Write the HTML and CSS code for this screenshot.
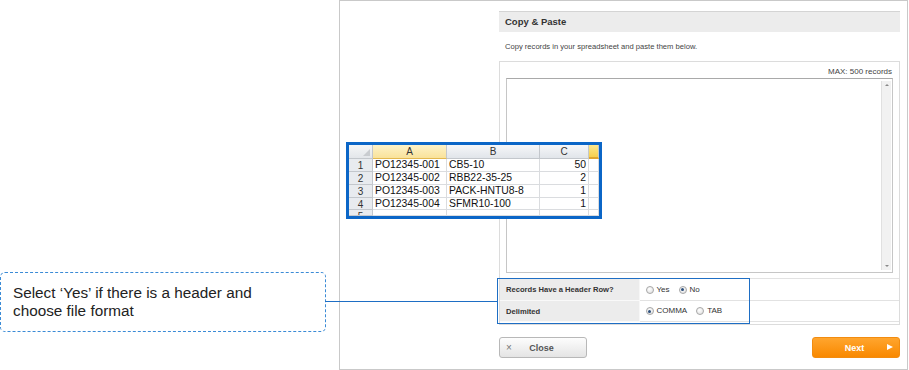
FILE: index.html
```html
<!DOCTYPE html>
<html lang="en">
    <head>
        <meta charset="UTF-8">
        <meta name="viewport" content="width=device-width, initial-scale=1.0">
        <title>Copy &amp; Paste - Import Guide</title>
        <link rel="stylesheet" href="styles.css">
    </head>
    <body>
        <div class="page">
            <aside class="notes">
                <div class="callout">Select ‘Yes’ if there is a header and<br>choose file format</div>
            </aside>

            <section class="dialog">
                <h2 class="section-title">Copy &amp; Paste</h2>
                <p class="lead">Copy records in your spreadsheet and paste them below.</p>

                <div class="paste-panel">
                    <div class="limit">MAX: 500 records</div>
                    <div class="paste-area">
                        <div class="scrollbar">
                            <span class="arrow-up"></span>
                            <span class="arrow-down"></span>
                        </div>
                    </div>

                    <table class="options">
                        <tr>
                            <th>Records Have a Header Row?</th>
                            <td>
                                <div class="choices">
                                    <label class="choice"><span class="radio"></span>Yes</label>
                                    <label class="choice"><span class="radio checked"></span>No</label>
                                </div>
                            </td>
                        </tr>
                        <tr>
                            <th>Delimited</th>
                            <td>
                                <div class="choices">
                                    <label class="choice"><span class="radio checked"></span>COMMA</label>
                                    <label class="choice"><span class="radio"></span>TAB</label>
                                </div>
                            </td>
                        </tr>
                    </table>
                </div>

                <div class="actions">
                    <button class="btn btn-close"><span class="btn-x">×</span>Close</button>
                    <button class="btn btn-next">Next<span class="btn-arrow"></span></button>
                </div>
            </section>
        </div>

        <!-- annotation overlays -->
        <div class="connector"></div>
        <div class="highlight"></div>

        <div class="sheet">
            <div class="cell corner"><span class="corner-mark"></span></div>
            <div class="cell col-head selected">A</div>
            <div class="cell col-head">B</div>
            <div class="cell col-head">C</div>
            <div class="cell col-head active"></div>

            <div class="cell row-head">1</div>
            <div class="cell">PO12345-001</div>
            <div class="cell">CB5-10</div>
            <div class="cell num">50</div>
            <div class="cell"></div>

            <div class="cell row-head">2</div>
            <div class="cell">PO12345-002</div>
            <div class="cell">RBB22-35-25</div>
            <div class="cell num">2</div>
            <div class="cell"></div>

            <div class="cell row-head">3</div>
            <div class="cell">PO12345-003</div>
            <div class="cell">PACK-HNTU8-8</div>
            <div class="cell num">1</div>
            <div class="cell"></div>

            <div class="cell row-head">4</div>
            <div class="cell">PO12345-004</div>
            <div class="cell">SFMR10-100</div>
            <div class="cell num">1</div>
            <div class="cell"></div>

            <div class="cell row-head">5</div>
            <div class="cell"></div>
            <div class="cell"></div>
            <div class="cell"></div>
            <div class="cell"></div>
        </div>
    </body>
</html>
```

FILE: styles.css
```css
* {
    box-sizing: border-box;
}

body {
    margin: 0;
    width: 909px;
    height: 370px;
    background-color: white;
    font-family: "Liberation Sans", Arial, sans-serif;
    color: #333;
    position: relative;
    overflow: hidden;
}

.page {
    display: flex;
}

.notes {
    width: 339px;
    padding-top: 272px;
}

.callout {
    width: 326px;
    height: 60px;
    border: 1px dashed #3b8bd6;
    border-radius: 5px;
    padding: 11px 0 0 12px;
    font-size: 15.3px;
    line-height: 18px;
    color: #222;
}

.dialog {
    width: 569px;
    height: 370px;
    border: 1px solid #c9c9c9;
    padding: 10px 7px 0 159px;
}

.section-title {
    margin: 0;
    height: 21px;
    border-top: 1px solid #d4d4d4;
    background-color: #ececec;
    font-size: 9.5px;
    font-weight: bold;
    line-height: 20px;
    padding-left: 6px;
    color: #333;
}

.lead {
    margin: 8px 0 7px;
    font-size: 7.6px;
    line-height: 14px;
    padding-left: 6px;
    color: #444;
}

.paste-panel {
    border: 1px solid #dcdcdc;
    padding-bottom: 2px;
}

.limit {
    height: 16px;
    padding: 4px 7px 0 0;
    text-align: right;
    font-size: 8px;
    line-height: 12px;
    color: #444;
}

.paste-area {
    margin: 0 6px 5px 6px;
    height: 195px;
    border: 1px solid #c6c6c6;
    border-top-color: #a9a9a9;
    display: flex;
    justify-content: flex-end;
    padding: 2px 1px 2px 0;
}

.scrollbar {
    width: 10px;
    background-color: #f1f1f1;
    border-left: 1px solid #e0e0e0;
    display: flex;
    flex-direction: column;
    justify-content: space-between;
    align-items: center;
    padding: 3px 0;
}

.arrow-up,
.arrow-down {
    width: 0;
    height: 0;
    border-left: 2px solid transparent;
    border-right: 2px solid transparent;
}

.arrow-up {
    border-bottom: 2px solid #888;
}

.arrow-down {
    border-top: 2px solid #888;
}

.options {
    width: 100%;
    border-collapse: collapse;
    border-top: 1px solid #e2e2e2;
}

.options th,
.options td {
    height: 22px;
    border-bottom: 1px solid #e2e2e2;
    padding: 0;
    font-size: 7.6px;
    vertical-align: middle;
}

.options tr:last-child th,
.options tr:last-child td {
    height: 21px;
}

.options th {
    width: 139px;
    background-color: #ececec;
    border-right: 1px solid #f7f7f7;
    border-bottom-color: #f9f9f9;
    text-align: left;
    font-weight: bold;
    padding-left: 6px;
    color: #333;
}

.options td {
    padding-left: 6px;
}

.choices {
    display: flex;
    align-items: center;
    gap: 9px;
}

.choice {
    display: flex;
    align-items: center;
    font-size: 8px;
    line-height: 10px;
    color: #333;
}

.radio {
    width: 8px;
    height: 8px;
    border-radius: 50%;
    border: 1px solid #a8a8a8;
    background: radial-gradient(circle at 40% 35%, #ffffff, #dcdcdc);
    margin-right: 3px;
    display: flex;
    align-items: center;
    justify-content: center;
}

.radio.checked::after {
    content: "";
    width: 3px;
    height: 3px;
    border-radius: 50%;
    background-color: #2c4f7c;
}

.actions {
    margin-top: 12px;
    display: flex;
    justify-content: space-between;
}

.btn {
    width: 88px;
    height: 21px;
    border-radius: 3px;
    font-family: "Liberation Sans", Arial, sans-serif;
    font-size: 9px;
    font-weight: bold;
    position: relative;
    padding: 0 3px 0 0;
    cursor: pointer;
}

.btn-close {
    background: linear-gradient(#fdfdfd, #e4e4e4);
    border: 1px solid #b8b8b8;
    color: #555;
}

.btn-x {
    position: absolute;
    left: 6px;
    top: 4px;
    font-size: 10px;
    font-weight: normal;
    line-height: 11px;
    color: #777;
}

.btn-next {
    background: linear-gradient(#ffa52e, #f98900);
    border: 1px solid #f28c10;
    color: white;
}

.btn-arrow {
    position: absolute;
    right: 6px;
    top: 6px;
    width: 0;
    height: 0;
    border-top: 3.5px solid transparent;
    border-bottom: 3.5px solid transparent;
    border-left: 6px solid white;
}

.connector {
    position: absolute;
    left: 325px;
    top: 301px;
    width: 172px;
    height: 1px;
    background-color: #1e6ec4;
}

.highlight {
    position: absolute;
    left: 497px;
    top: 278px;
    width: 253px;
    height: 46px;
    border: 1px solid #1e6ec4;
}

.sheet {
    position: absolute;
    left: 346px;
    top: 142px;
    width: 256px;
    height: 77px;
    border: 3px solid #0b66c7;
    background-color: white;
    display: grid;
    grid-template-columns: 24px 74px 93px 49px 1fr;
    grid-template-rows: 14px 13px 13px 13px 12px 1fr;
    overflow: hidden;
    font-size: 10.4px;
    color: #111;
}

.cell {
    border-right: 1px solid #dadcdf;
    border-bottom: 1px solid #dadcdf;
    line-height: 12px;
    padding-left: 2px;
    white-space: nowrap;
    overflow: hidden;
}

.cell.num {
    text-align: right;
    padding: 0 2px 0 0;
}

.corner {
    background: linear-gradient(#f5f6f7, #e3e6ea);
    border-color: #c3c7cc;
    position: relative;
}

.corner-mark {
    position: absolute;
    right: 2px;
    bottom: 2px;
    width: 0;
    height: 0;
    border-left: 7px solid transparent;
    border-bottom: 7px solid #c9ccd0;
}

.col-head {
    background: linear-gradient(#f6f7f9, #e1e5ea);
    border-color: #c3c7cc;
    text-align: center;
    padding-left: 0;
    font-size: 10px;
    line-height: 13px;
    color: #333;
}

.col-head.selected {
    background: linear-gradient(#fdf2c8, #f9e29a);
    border-bottom-color: #e3b84f;
}

.col-head.active {
    background: linear-gradient(#fde88e, #f6cf4e);
    border-bottom: 2px solid #e0a530;
}

.row-head {
    background-color: #e8ebef;
    border-color: #c3c7cc;
    text-align: center;
    padding-left: 0;
    font-size: 10px;
    line-height: 13px;
    color: #333;
}
```
